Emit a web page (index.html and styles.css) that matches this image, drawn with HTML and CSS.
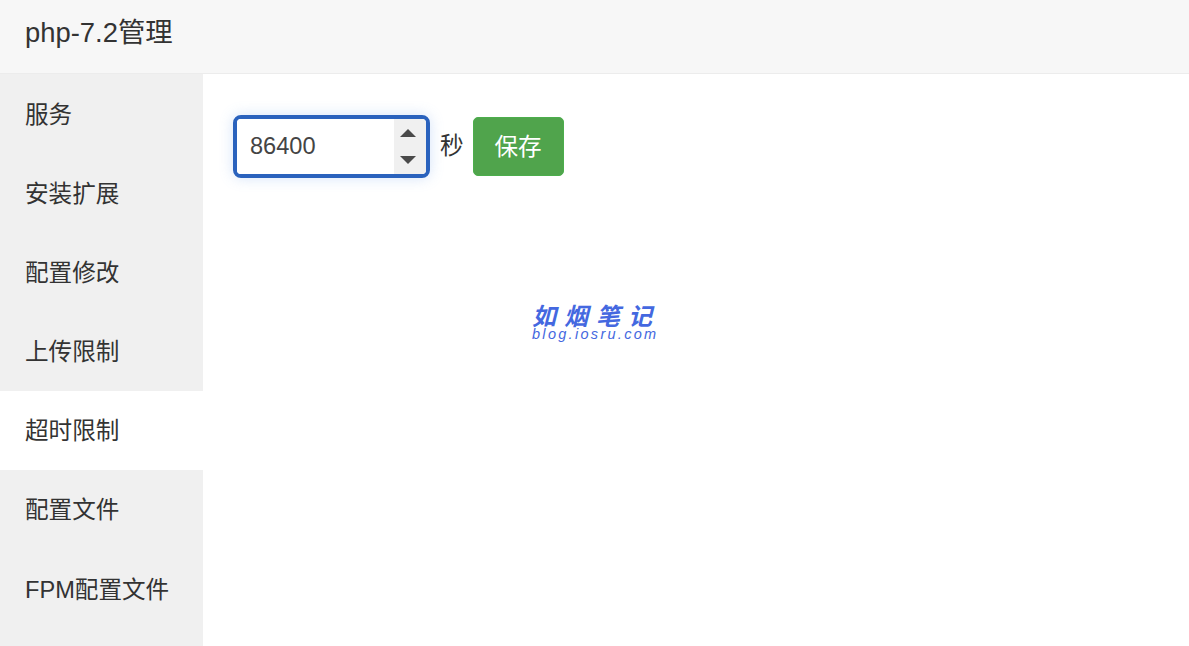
FILE: index.html
```html
<!DOCTYPE html>
<html lang="zh-CN">
  <head>
    <meta charset="UTF-8" />
    <meta name="viewport" content="width=device-width, initial-scale=1.0" />
    <title>php-7.2管理</title>
    <link rel="stylesheet" href="styles.css">
  </head>
  <body>
    <div class="title">php-7.2管理</div>
    <div class="main">
      <ul class="menu">
        <li>服务</li>
        <li>安装扩展</li>
        <li>配置修改</li>
        <li>上传限制</li>
        <li class="active">超时限制</li>
        <li>配置文件</li>
        <li>FPM配置文件</li>
      </ul>
      <div class="content">
        <div class="form-row">
          <div class="number-box">
            <input class="number-input" type="text" value="86400" />
            <div class="spin">
              <svg width="16" height="8" viewBox="0 0 16 8"><path d="M8 0 L16 8 H0 Z" fill="#4a4a4a"/></svg>
              <svg width="16" height="8" viewBox="0 0 16 8"><path d="M8 8 L16 0 H0 Z" fill="#4a4a4a"/></svg>
            </div>
          </div>
          <span class="unit">秒</span>
          <button class="save">保存</button>
        </div>
      </div>
    </div>
    <div class="watermark">
      <div class="wm-name">如烟笔记</div>
      <div class="wm-url">blog.iosru.com</div>
    </div>
  </body>
</html>
```

FILE: styles.css
```css
* {
  box-sizing: border-box;
}
html,
body {
  height: 100%;
}
body {
  margin: 0;
  background: #fff;
  color: #333;
  font-family: "Liberation Sans", "Noto Sans CJK SC", sans-serif;
  overflow: hidden;
}

/* Header */
.title {
  height: 74px;
  padding: 0 25px;
  font-size: 27.4px;
  line-height: 66px;
  background: #f7f7f7;
  border-bottom: 1px solid #ececec;
}

/* Side menu */
.main {
  display: flex;
  height: 572px;
}
.menu {
  width: 203px;
  margin: 0;
  padding: 1px 0 0;
  background: #f0f0f0;
  list-style: none;
}
.menu li {
  height: 79.1px;
  padding-left: 25px;
  font-size: 23.6px;
  line-height: 80px;
  white-space: nowrap;
}
.menu li.active {
  background: #fff;
}

/* Form */
.content {
  flex: 1;
  padding: 41px 30px;
}
.form-row {
  display: flex;
  align-items: center;
}
.number-box {
  display: flex;
  width: 197px;
  height: 63px;
  border: 4px solid #2a62bd;
  border-radius: 8px;
  background: #fff;
  box-shadow: 0 0 14px rgba(102, 155, 235, 0.28);
  overflow: hidden;
}
.number-input {
  flex: 1;
  width: 0;
  padding: 0 0 1px 13px;
  border: 0;
  outline: none;
  color: #444;
  font-family: inherit;
  font-size: 23.6px;
}
.spin {
  display: flex;
  flex-direction: column;
  justify-content: space-between;
  align-items: center;
  width: 32px;
  padding: 10px 4px 10px 0;
  background: #f0f0f0;
}
.unit {
  margin-left: 10px;
  padding-bottom: 5px;
  font-size: 23.6px;
}
.save {
  width: 91px;
  height: 59px;
  margin-left: 9px;
  padding: 0 0 4px;
  border: 1px solid #4cae4c;
  border-radius: 5px;
  background: #50a44c;
  color: #fff;
  font-family: inherit;
  font-size: 23.6px;
}

/* Watermark over the page */
.watermark {
  position: absolute;
  left: 532px;
  top: 305px;
  width: 128px;
  color: #4468e0;
  font-style: italic;
}
.wm-name {
  font-size: 24px;
  font-weight: 700;
  line-height: 23px;
  letter-spacing: 8px;
  white-space: nowrap;
}
.wm-url {
  font-size: 14.5px;
  line-height: 12px;
  letter-spacing: 2.3px;
  white-space: nowrap;
}
```
